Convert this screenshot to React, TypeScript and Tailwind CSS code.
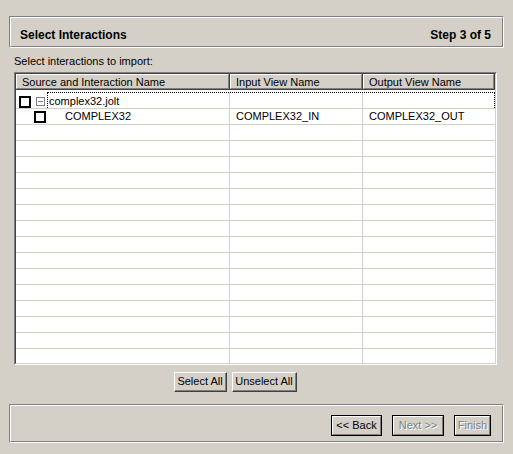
import React from "react";

function Etched({ className = "", innerClassName = "", children }: { className?: string; innerClassName?: string; children?: React.ReactNode }) {
  return (
    <div className={`border-t border-l border-t-[#808080] border-l-[#808080] border-b border-r border-b-white border-r-white ${className}`}>
      <div className={`h-full border-t border-l border-t-white border-l-white border-b border-r border-b-[#808080] border-r-[#808080] ${innerClassName}`}>
        {children}
      </div>
    </div>
  );
}

function RaisedButton({ w, label }: { w: string; label: string }) {
  return (
    <div className={`${w} h-[20px] border-t border-l border-t-white border-l-white border-b border-r border-b-[#404040] border-r-[#404040]`}>
      <div className="h-full border-b border-r border-b-[#808080] border-r-[#808080] flex items-center justify-center bg-[#d4d0c8]">
        {label}
      </div>
    </div>
  );
}

function FramedButton({ w, label, disabled = false }: { w: string; label: string; disabled?: boolean }) {
  return (
    <div className={`${w} h-[21px] border border-black`}>
      <div className="h-full border-t border-l border-t-white border-l-white border-b border-r border-b-[#808080] border-r-[#808080] flex items-center justify-center bg-[#d4d0c8]">
        {disabled ? (
          <span className="text-[#808080] [text-shadow:1px_1px_0_#ffffff]">{label}</span>
        ) : (
          <span>{label}</span>
        )}
      </div>
    </div>
  );
}

function HeaderCell({ w, label }: { w: string; label: string }) {
  return (
    <div className={`${w} h-full border-r border-b border-r-[#404040] border-b-[#404040]`}>
      <div className="h-full border-t border-l border-t-white border-l-white border-r border-b border-r-[#808080] border-b-[#808080] bg-[#d4d0c8] pl-[5px] pt-[1px] flex items-center whitespace-nowrap overflow-hidden">
        {label}
      </div>
    </div>
  );
}

function CheckBox({ className = "" }: { className?: string }) {
  return <div className={`w-[12px] h-[12px] border-2 border-black bg-white shrink-0 ${className}`} />;
}

export default function App() {
  const emptyRows = Array.from({ length: 16 });
  return (
    <div className="w-[513px] h-[454px] bg-[#d4d0c8] pt-[16px] px-[9px] font-['Liberation_Sans',Arial,sans-serif] text-[11px] leading-[13px] text-black overflow-hidden">
      <Etched className="h-[32px]" innerClassName="flex justify-between pt-[10px] pl-[9px] pr-[11px] font-bold text-[12px] leading-[14px]">
        <span>Select Interactions</span>
        <span>Step 3 of 5</span>
      </Etched>

      <div className="mt-[7px] pl-[5px]">Select interactions to import:</div>

      <div className="mt-[4px] ml-[5px] w-[483px] h-[293px] border-t border-l border-t-[#808080] border-l-[#808080] border-b border-r border-b-white border-r-white">
        <div className="h-full border-t border-l border-t-[#404040] border-l-[#404040] border-b border-r border-b-[#d4d0c8] border-r-[#d4d0c8] bg-white flex flex-col overflow-hidden">
          <div className="h-[16px] flex shrink-0">
            <HeaderCell w="w-[214px]" label="Source and Interaction Name" />
            <HeaderCell w="w-[133px]" label="Input View Name" />
            <HeaderCell w="flex-1" label="Output View Name" />
          </div>
          <div className="pt-[2px] flex flex-col">
            <div className="relative h-[17px] flex border-b border-b-[#d4d0c8] shrink-0">
              <div className="w-[214px] border-r border-r-[#d4d0c8] flex items-start pl-[3px]">
                <CheckBox className="mt-[4px]" />
                <div className="mt-[5px] ml-[5px] w-[9px] h-[9px] border border-[#808080] flex items-center justify-center shrink-0">
                  <div className="w-[5px] h-[1px] bg-[#808080]" />
                </div>
                <span className="mt-[3px] ml-[4px]">complex32.jolt</span>
              </div>
              <div className="w-[133px] border-r border-r-[#d4d0c8]" />
              <div className="flex-1" />
              <div className="absolute left-[31px] right-0 top-0 bottom-0 border-t border-l border-r border-dotted border-black bg-white/0" />
            </div>
            <div className="h-[16px] flex border-b border-b-[#d4d0c8] shrink-0">
              <div className="w-[214px] border-r border-r-[#d4d0c8] flex items-start pl-[18px]">
                <CheckBox className="mt-[2px]" />
                <span className="mt-[1px] ml-[19px]">COMPLEX32</span>
              </div>
              <div className="w-[133px] border-r border-r-[#d4d0c8] pl-[6px] pt-[1px]">COMPLEX32_IN</div>
              <div className="flex-1 pl-[6px] pt-[1px]">COMPLEX32_OUT</div>
            </div>
            {emptyRows.map((_, i) => (
              <div key={i} className="h-[16px] flex border-b border-b-[#d4d0c8] shrink-0">
                <div className="w-[214px] border-r border-r-[#d4d0c8]" />
                <div className="w-[133px] border-r border-r-[#d4d0c8]" />
                <div className="flex-1" />
              </div>
            ))}
          </div>
        </div>
      </div>

      <div className="mt-[7px] flex gap-[5px] pl-[165px]">
        <RaisedButton w="w-[53px]" label="Select All" />
        <RaisedButton w="w-[65px]" label="Unselect All" />
      </div>

      <Etched className="mt-[12px] h-[39px]" innerClassName="flex justify-end items-start gap-[10px] pt-[9px] pr-[11px]">
        <FramedButton w="w-[51px]" label="<< Back" />
        <FramedButton w="w-[52px]" label="Next >>" disabled />
        <FramedButton w="w-[37px]" label="Finish" disabled />
      </Etched>
    </div>
  );
}
